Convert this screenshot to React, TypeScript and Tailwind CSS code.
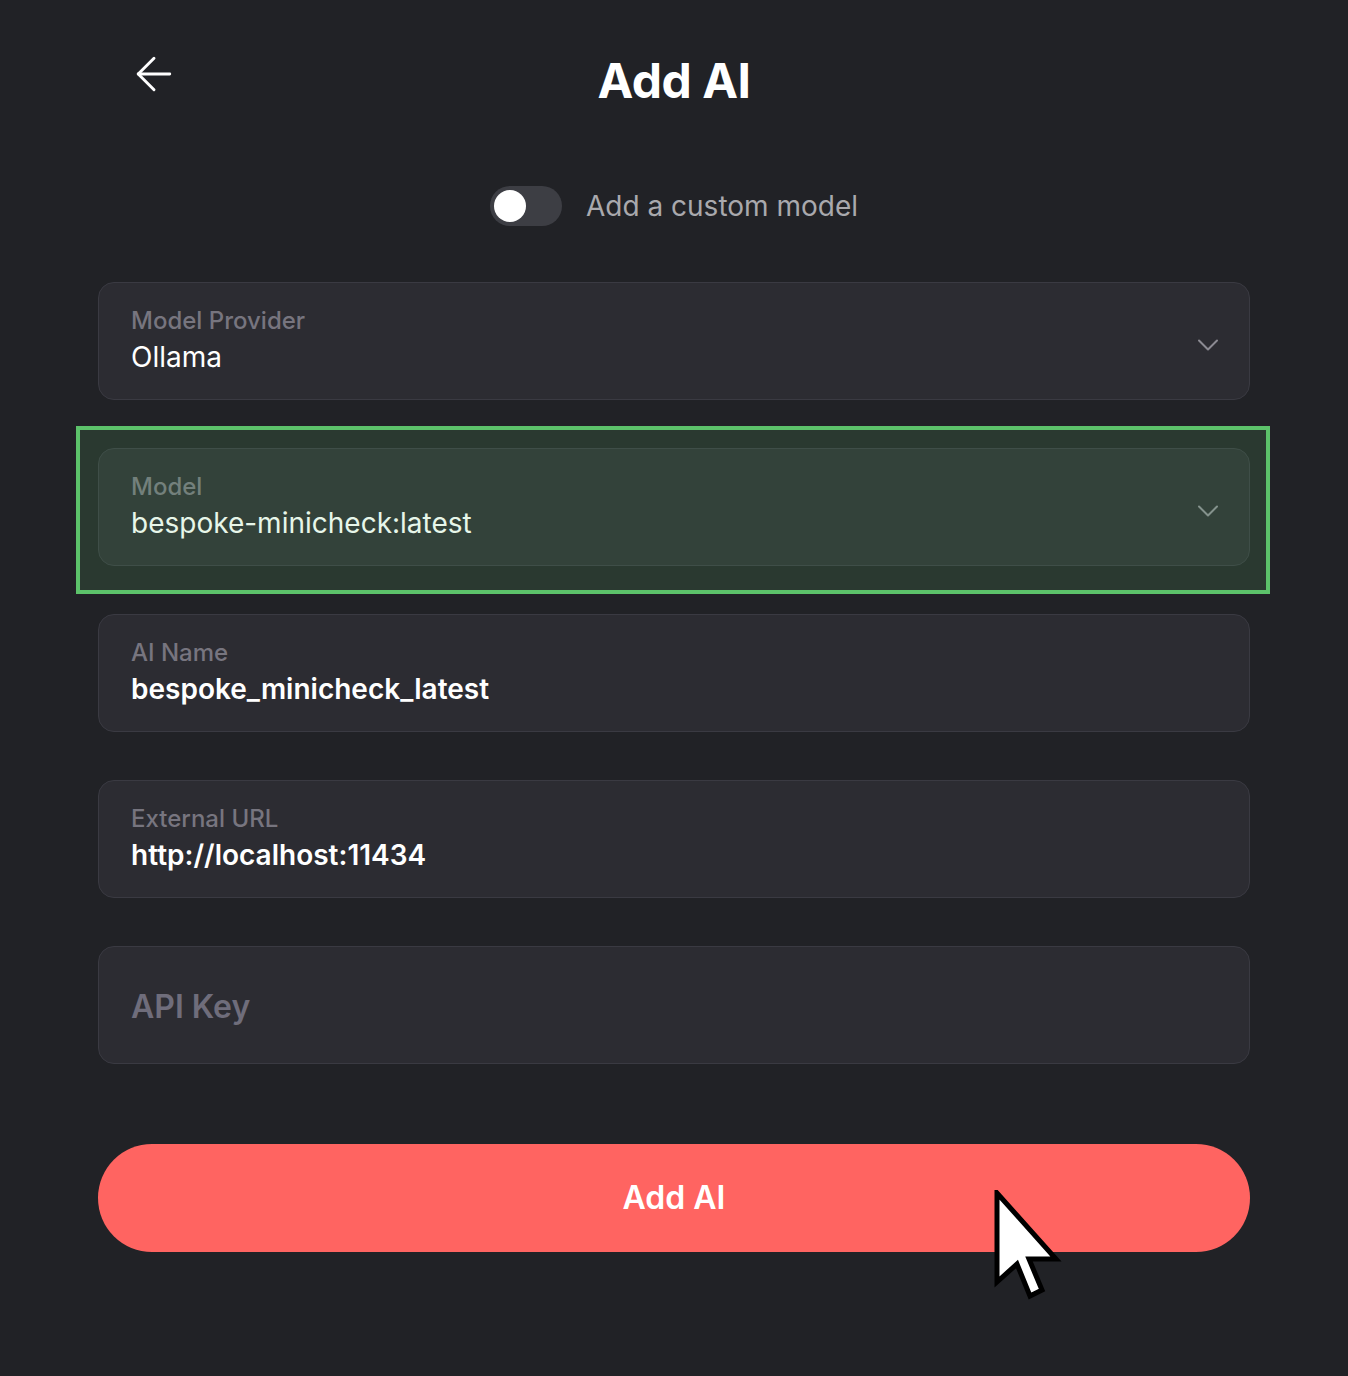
import React from 'react';
import { ArrowLeft, ChevronDown } from 'lucide-react';

interface FieldProps {
    label?: string;
    value?: string;
    placeholder?: string;
    select?: boolean;
    strong?: boolean;
    highlight?: boolean;
}

function Field({ label, value, placeholder, select, strong, highlight }: FieldProps) {
    return (
        <div className="relative">
            <div className="flex h-[118px] items-center rounded-2xl border border-[#3a3a42] bg-[#2c2c32] pl-8 pr-[23px]">
                {placeholder ? (
                    <span className="mt-[3px] flex-1 text-[32px] font-semibold text-[#6f6d7b]">{placeholder}</span>
                ) : (
                    <div className="flex flex-1 flex-col">
                        <span className="text-[24px] leading-[28px] font-medium text-[#77757f]">{label}</span>
                        <span
                            className={
                                'mt-1 text-[28px] leading-[36px] text-white ' +
                                (strong ? 'font-semibold' : 'font-normal')
                            }
                        >
                            {value}
                        </span>
                    </div>
                )}
                {select && <ChevronDown size={36} strokeWidth={1.35} className="mt-2 text-[#8b8a92]" />}
            </div>
            {highlight && (
                <div className="pointer-events-none absolute -top-[22px] -right-[20px] -bottom-[28px] -left-[22px] border-4 border-[#5cc26a] bg-[#5cc26a]/15" />
            )}
        </div>
    );
}

function Cursor() {
    return (
        <svg width="70" height="112" viewBox="0 0 70 112" className="pointer-events-none absolute left-[896px] top-[46px]">
            <path
                d="M3 3 L3 92 L23 74 L36 106 L48 100 L35 69 L62 69 Z"
                fill="#ffffff"
                stroke="#000000"
                strokeWidth="5"
                strokeLinejoin="miter"
            />
        </svg>
    );
}

export default function App() {
    return (
        <div className="min-h-[1376px] w-full bg-[#212226] text-white" style={{ fontFamily: 'Inter, "Noto Sans", sans-serif' }}>
            <div className="px-[98px]">
                <header className="grid grid-cols-[1fr_auto_1fr] pt-[50px]">
                    <button className="-mt-[3px] ml-[29px] flex h-[54px] w-[54px] items-center justify-center justify-self-start text-white">
                        <ArrowLeft size={54} strokeWidth={1.3} />
                    </button>
                    <h1 className="text-[48px] leading-[62px] font-bold tracking-[-0.5px]">Add AI</h1>
                    <div />
                </header>

                <div className="mt-[74px] flex items-center justify-center gap-6">
                    <div className="flex h-[40px] w-[72px] items-center rounded-full bg-[#3d3e44] px-1">
                        <div className="h-[32px] w-[32px] rounded-full bg-white" />
                    </div>
                    <span className="text-[28px] leading-[40px] text-[#a9a9ad]">Add a custom model</span>
                </div>

                <div className="mt-[56px] flex flex-col gap-[48px]">
                    <Field label="Model Provider" value="Ollama" select />
                    <Field label="Model" value="bespoke-minicheck:latest" select highlight />
                    <Field label="AI Name" value="bespoke_minicheck_latest" strong />
                    <Field label="External URL" value="http://localhost:11434" strong />
                    <Field placeholder="API Key" />
                </div>

                <div className="relative mt-[80px]">
                    <button className="flex h-[108px] w-full items-center justify-center rounded-full bg-[#ff6461] text-[32px] font-semibold text-white">
                        Add AI
                    </button>
                    <Cursor />
                </div>
            </div>
        </div>
    );
}
